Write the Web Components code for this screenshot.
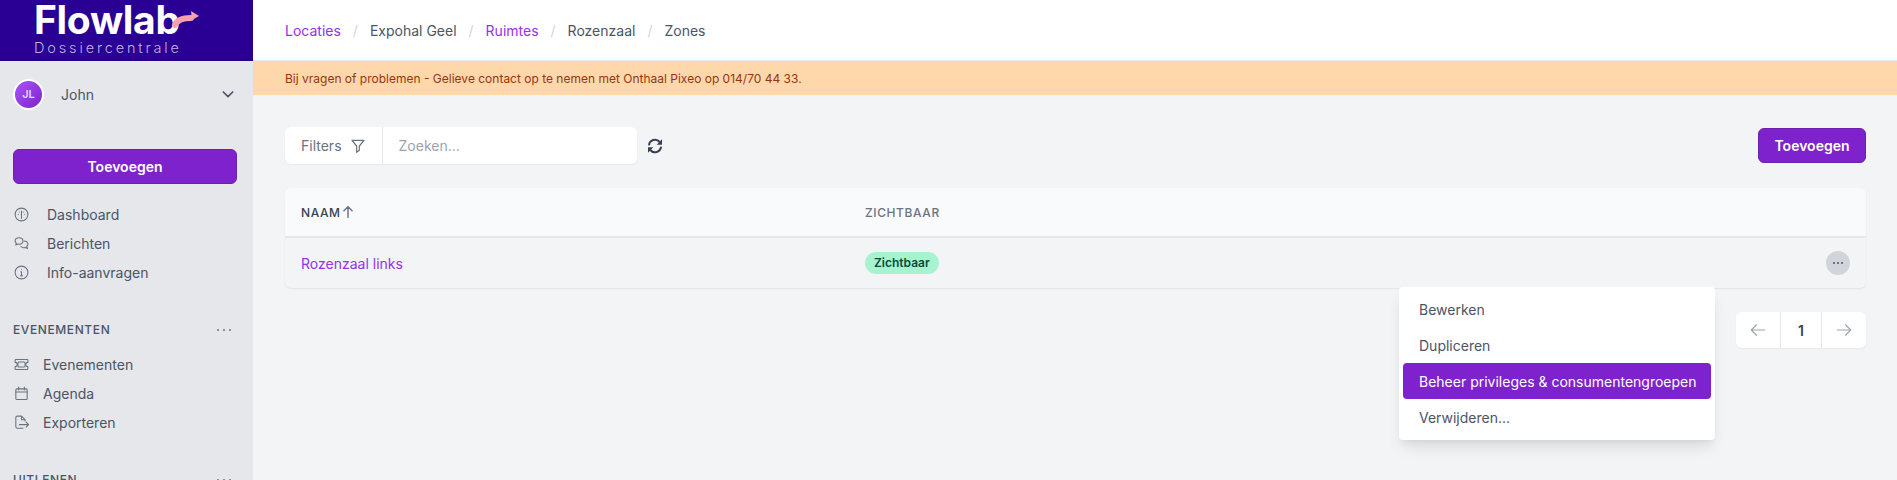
<!DOCTYPE html>
<html>
<head>
<meta charset="utf-8">
<style>
  html, body { margin: 0; height: 100%; overflow: hidden; }
  body { font-family: Inter, "Liberation Sans", sans-serif; font-size: 14px; color: #374151; background: #f3f4f6; }
</style>
</head>
<body>
<flow-app>
  <flow-sidebar slot="sidebar">
    <flow-nav-item label="Dashboard" icon="gauge"></flow-nav-item>
    <flow-nav-item label="Berichten" icon="chat"></flow-nav-item>
    <flow-nav-item label="Info-aanvragen" icon="info"></flow-nav-item>
    <flow-nav-section title="Evenementen">
      <flow-nav-item tight label="Evenementen" icon="ticket"></flow-nav-item>
      <flow-nav-item tight label="Agenda" icon="calendar"></flow-nav-item>
      <flow-nav-item tight label="Exporteren" icon="export"></flow-nav-item>
    </flow-nav-section>
    <flow-nav-section title="Uitlenen"></flow-nav-section>
  </flow-sidebar>
  <flow-topbar></flow-topbar>
  <flow-banner>Bij vragen of problemen - Gelieve contact op te nemen met Onthaal Pixeo op 014/70 44 33.</flow-banner>
  <flow-toolbar></flow-toolbar>
  <flow-table></flow-table>
</flow-app>

<script>
const ICONS = {
  gauge: '<circle cx="12" cy="12" r="9"/><path d="M12 7v8M12 15v2.5M7.5 12h.01M16.5 12h.01M9 8.5h.01M15 8.5h.01"/>',
  chat: '<path d="M8.5 4C5.5 4 3 5.9 3 8.4c0 1.3.7 2.4 1.7 3.2L4 14l2.9-1.2c.5.1 1 .2 1.6.2 3 0 5.5-2 5.5-4.6S11.500 4 8.500 4z"/><path d="M15.500 8.500c3 .2 5.500 2 5.500 4.500 0 1.300-.7 2.400-1.700 3.200L20.500 19l-3.300-1.300c-.5.1-1.100.2-1.700.2-2 0-3.700-.8-4.700-2"/>',
  info: '<path d="M12 16.500V11h-1M12 7.800h.01"/><path d="M10.500 16.500h3"/><circle cx="12" cy="12" r="9"/>',
  ticket: '<path d="M4 5h16a1 1 0 011 1v3a3 3 0 000 6v3a1 1 0 01-1 1H4a1 1 0 01-1-1v-3a3 3 0 000-6V6a1 1 0 011-1z" transform="translate(0 0)"/><rect x="7" y="8.500" width="10" height="7" rx="1.500"/>',
  calendar: '<rect x="4" y="5.500" width="16" height="15" rx="1.500"/><path d="M4 10h16M8 3v4M16 3v4"/>',
  export: '<path d="M14 20H6a2 2 0 01-2-2V5a2 2 0 012-2h6l5 5v2M12 3v5h5"/><path d="M9 15h13M18.500 11.500L22 15l-3.500 3.500"/>'
};

function svg(name, size) {
  return `<svg width="${size}" height="${size}" viewBox="0 0 24 24" fill="none" stroke="currentColor" stroke-width="1.500" stroke-linecap="round" stroke-linejoin="round">${ICONS[name]}</svg>`;
}

const appTemplate = document.createElement("template");
appTemplate.innerHTML = /*html*/`
  <style>
    :host { display: flex; height: 480px; overflow: hidden; }
    main { flex: 1; min-width: 0; display: flex; flex-direction: column; }
    .content { padding: 32px 31px 0 32px; display: flex; flex-direction: column; gap: 24px; }
  </style>
  <slot name="sidebar"></slot>
  <main>
    <slot name="none"></slot>
    <slot id="top"></slot>
  </main>`;

class FlowApp extends HTMLElement {
  constructor() {
    super();
    this.attachShadow({ mode: "open" });
  }

  connectedCallback() {
    this.shadowRoot.appendChild(appTemplate.content.cloneNode(true));
  }
}

const sidebarTemplate = document.createElement("template");
sidebarTemplate.innerHTML = /*html*/`
  <style>
    :host { display: block; width: 253px; flex: none; background: #e5e7eb; overflow: hidden; }
    .logo { height: 61px; background: #2a0094; box-sizing: border-box; padding: 2px 0 0 34px; color: #fff; position: relative; }
    .brand { font-size: 39px; line-height: 35px; font-weight: 700; letter-spacing: -0.3px; }
    .sub { font-size: 14.5px; line-height: 16px; margin-top: 3px; letter-spacing: 2.85px; color: #bfb2e6; font-weight: 300; }
    .arrow { position: absolute; left: 169px; top: 8px; }
    .user { display: flex; align-items: center; height: 66px; padding: 0 17px 0 13px; }
    .avatar { width: 27px; height: 27px; border: 2px solid #fff; border-radius: 50%; background: linear-gradient(135deg, #a855f7, #7e22ce); color: #e9d5ff; font-size: 11px; font-weight: 600; display: flex; align-items: center; justify-content: center; flex: none; }
    .name { flex: 1; margin-left: 17px; color: #4b5563; }
    .user svg { color: #4b5563; }
    button { display: block; width: 224px; height: 35px; margin: 22px 0 16px 13px; border: 1px solid #6b21a8; border-radius: 6px; background: #7e22ce; color: #fff; font: 600 14px Inter, sans-serif; }
  </style>
  <div class="logo">
    <div class="brand">Flowlab</div>
    <div class="sub">Dossiercentrale</div>
    <svg class="arrow" width="32" height="22" viewBox="0 0 32 22"><path d="M6 17c2-5 9-7 16-7" fill="none" stroke="#f4a0ae" stroke-width="6" stroke-linecap="round"/><path d="M22 3l8 5-7 4z" fill="#f4a0ae"/></svg>
  </div>
  <div class="user">
    <div class="avatar">JL</div>
    <div class="name">John</div>
    <svg width="16" height="16" viewBox="0 0 24 24" fill="none" stroke="currentColor" stroke-width="2.500" stroke-linecap="round" stroke-linejoin="round"><path d="M19 9l-7 7-7-7"/></svg>
  </div>
  <button>Toevoegen</button>
  <slot></slot>`;

class FlowSidebar extends HTMLElement {
  constructor() {
    super();
    this.attachShadow({ mode: "open" });
  }

  connectedCallback() {
    this.shadowRoot.appendChild(sidebarTemplate.content.cloneNode(true));
  }
}

class FlowNavItem extends HTMLElement {
  constructor() {
    super();
    this.attachShadow({ mode: "open" });
  }

  connectedCallback() {
    const gap = this.hasAttribute("tight") ? 13 : 17;
    this.shadowRoot.innerHTML = /*html*/`
      <style>
        :host { display: flex; align-items: center; height: 29px; padding-left: 13px; gap: ${gap}px; color: #4b5563; }
        svg { flex: none; color: #6b7280; }
      </style>
      ${svg(this.getAttribute("icon"), 17)}
      <span>${this.getAttribute("label")}</span>`;
  }
}

class FlowNavSection extends HTMLElement {
  constructor() {
    super();
    this.attachShadow({ mode: "open" });
  }

  connectedCallback() {
    this.shadowRoot.innerHTML = /*html*/`
      <style>
        :host { display: block; margin-top: 28px; }
        .head { display: flex; justify-content: space-between; align-items: center; height: 29px; margin-bottom: 6px; padding: 0 22px 0 13px; }
        .title { font-size: 12px; font-weight: 500; letter-spacing: 0.6px; text-transform: uppercase; color: #4b5563; }
        .dots { display: flex; gap: 3px; }
        .dots i { width: 2px; height: 2px; border-radius: 50%; background: #6b7280; margin-left: 1px; }
      </style>
      <div class="head">
        <span class="title">${this.getAttribute("title")}</span>
        <span class="dots"><i></i><i></i><i></i></span>
      </div>
      <slot></slot>`;
  }
}

const topbarTemplate = document.createElement("template");
topbarTemplate.innerHTML = /*html*/`
  <style>
    :host { display: flex; align-items: center; box-sizing: border-box; height: 61px; padding-left: 32px; background: #fff; border-bottom: 1px solid #e5e7eb; font-size: 14px; color: #4b5563; }
    a { color: #9333ea; }
    i { font-style: normal; color: #d1d5db; margin: 0 12px; }
  </style>
  <a>Locaties</a><i>/</i><span>Expohal Geel</span><i>/</i><a>Ruimtes</a><i>/</i><span>Rozenzaal</span><i>/</i><span>Zones</span>`;

class FlowTopbar extends HTMLElement {
  constructor() {
    super();
    this.attachShadow({ mode: "open" });
  }

  connectedCallback() {
    this.shadowRoot.appendChild(topbarTemplate.content.cloneNode(true));
  }
}

class FlowBanner extends HTMLElement {
  constructor() {
    super();
    this.attachShadow({ mode: "open" }).innerHTML = /*html*/`
      <style>
        :host { display: flex; align-items: center; height: 34px; padding-left: 32px; background: #fed7aa; color: #9a3412; font-size: 12px; }
      </style>
      <slot></slot>`;
  }
}

const toolbarTemplate = document.createElement("template");
toolbarTemplate.innerHTML = /*html*/`
  <style>
    :host { display: flex; align-items: center; justify-content: space-between; padding: 32px 31px 24px 32px; }
    .left { display: flex; align-items: center; gap: 10px; }
    .search { display: flex; height: 37px; width: 352px; background: #fff; border-radius: 6px; box-shadow: 0 1px 2px rgba(0,0,0,.05); }
    .filters { display: flex; align-items: center; gap: 8px; padding: 0 16px; border-right: 1px solid #e5e7eb; color: #6b7280; }
    .field { padding-left: 16px; display: flex; align-items: center; color: #9ca3af; }
    .sync { color: #374151; display: block; }
    button { width: 108px; height: 35px; border: 1px solid #6b21a8; border-radius: 6px; background: #7e22ce; color: #fff; font: 600 14px Inter, sans-serif; }
  </style>
  <div class="left">
    <div class="search">
      <div class="filters">Filters
        <svg width="16" height="16" viewBox="0 0 24 24" fill="none" stroke="currentColor" stroke-width="1.800" stroke-linejoin="round"><path d="M3 3.500h18l-7 8.500v6.500l-4 3V12z"/></svg>
      </div>
      <div class="field">Zoeken...</div>
    </div>
    <svg class="sync" width="16" height="16" viewBox="0 0 24 24" fill="none" stroke="currentColor" stroke-width="3"><path d="M3 11a9 9 0 0116-5l2 2M21 13a9 9 0 01-16 5l-2-2"/><path fill="currentColor" stroke="none" d="M22.500 2v8h-8zM1.500 22v-8h8z"/></svg>
  </div>
  <button>Toevoegen</button>`;

class FlowToolbar extends HTMLElement {
  constructor() {
    super();
    this.attachShadow({ mode: "open" });
  }

  connectedCallback() {
    this.shadowRoot.appendChild(toolbarTemplate.content.cloneNode(true));
  }
}

const tableTemplate = document.createElement("template");
tableTemplate.innerHTML = /*html*/`
  <style>
    :host { display: block; margin: 0 31px 0 32px; position: relative; }
    .card { border-radius: 6px; box-shadow: 0 1px 2px rgba(0,0,0,.07); }
    .row { display: grid; grid-template-columns: 564px 1fr 72px; align-items: center; padding-left: 16px; }
    .head { height: 50px; background: #f9fafb; border-bottom: 2px solid #e5e7eb; box-sizing: border-box; border-radius: 6px 6px 0 0; font-size: 12px; font-weight: 500; letter-spacing: 0.6px; text-transform: uppercase; color: #6b7280; }
    .sorted { display: flex; align-items: center; color: #374151; }
    .body { height: 50px; }
    a { color: #9333ea; }
    .pill { display: inline-block; padding: 0 9px; border-radius: 999px; background: #a7f3d0; color: #064e3b; font-size: 12px; font-weight: 600; line-height: 22px; }
    .more { width: 24px; height: 24px; border-radius: 50%; background: #d1d5db; display: flex; align-items: center; justify-content: center; justify-self: end; margin-right: 16px; gap: 2px; }
    .more i { width: 2px; height: 2px; border-radius: 50%; background: #4b5563; }
    .pager { display: flex; justify-content: flex-end; margin-top: 24px; }
    .pages { display: flex; height: 36px; background: #fff; border-radius: 6px; box-shadow: 0 1px 2px rgba(0,0,0,.05); color: #9ca3af; }
    .pages > div { display: flex; align-items: center; justify-content: center; }
    .num { width: 40px; border-left: 1px solid #e5e7eb; border-right: 1px solid #e5e7eb; color: #374151; font-weight: 600; }
    .arr { width: 44px; }
    .menu { position: absolute; top: 99px; right: 151px; width: 316px; height: 153px; box-sizing: border-box; padding: 4px; background: #fff; border-radius: 4px; box-shadow: 0 10px 15px -3px rgba(0,0,0,.1), 0 4px 6px -2px rgba(0,0,0,.05); color: #4b5563; display: flex; flex-direction: column; gap: 0; }
    .menu div { height: 36px; flex: none; display: flex; align-items: center; padding-left: 16px; border-radius: 4px; }
    .menu .active { background: #7e22ce; color: #fff; }
  </style>
  <div class="card">
    <div class="row head">
      <div class="sorted">Naam<svg width="14" height="14" viewBox="0 0 24 24" fill="none" stroke="#6b7280" stroke-width="2.500" stroke-linecap="round" stroke-linejoin="round"><path d="M5 10l7-7m0 0l7 7m-7-7v18"/></svg></div>
      <div>Zichtbaar</div>
      <div></div>
    </div>
    <div class="row body">
      <a>Rozenzaal links</a>
      <div><span class="pill">Zichtbaar</span></div>
      <div class="more"><i></i><i></i><i></i></div>
    </div>
  </div>
  <div class="pager">
    <div class="pages">
      <div class="arr"><svg width="18" height="18" viewBox="0 0 24 24" fill="none" stroke="currentColor" stroke-width="1.500" stroke-linecap="round" stroke-linejoin="round"><path d="M10 19l-7-7m0 0l7-7m-7 7h18"/></svg></div>
      <div class="num">1</div>
      <div class="arr"><svg width="18" height="18" viewBox="0 0 24 24" fill="none" stroke="currentColor" stroke-width="1.500" stroke-linecap="round" stroke-linejoin="round"><path d="M14 5l7 7m0 0l-7 7m7-7H3"/></svg></div>
    </div>
  </div>
  <div class="menu">
    <div>Bewerken</div>
    <div>Dupliceren</div>
    <div class="active">Beheer privileges &amp; consumentengroepen</div>
    <div>Verwijderen...</div>
  </div>`;

class FlowTable extends HTMLElement {
  constructor() {
    super();
    this.attachShadow({ mode: "open" });
  }

  connectedCallback() {
    this.shadowRoot.appendChild(tableTemplate.content.cloneNode(true));
  }
}

customElements.define("flow-app", FlowApp);
customElements.define("flow-sidebar", FlowSidebar);
customElements.define("flow-nav-item", FlowNavItem);
customElements.define("flow-nav-section", FlowNavSection);
customElements.define("flow-topbar", FlowTopbar);
customElements.define("flow-banner", FlowBanner);
customElements.define("flow-toolbar", FlowToolbar);
customElements.define("flow-table", FlowTable);
</script>
</body>
</html>
